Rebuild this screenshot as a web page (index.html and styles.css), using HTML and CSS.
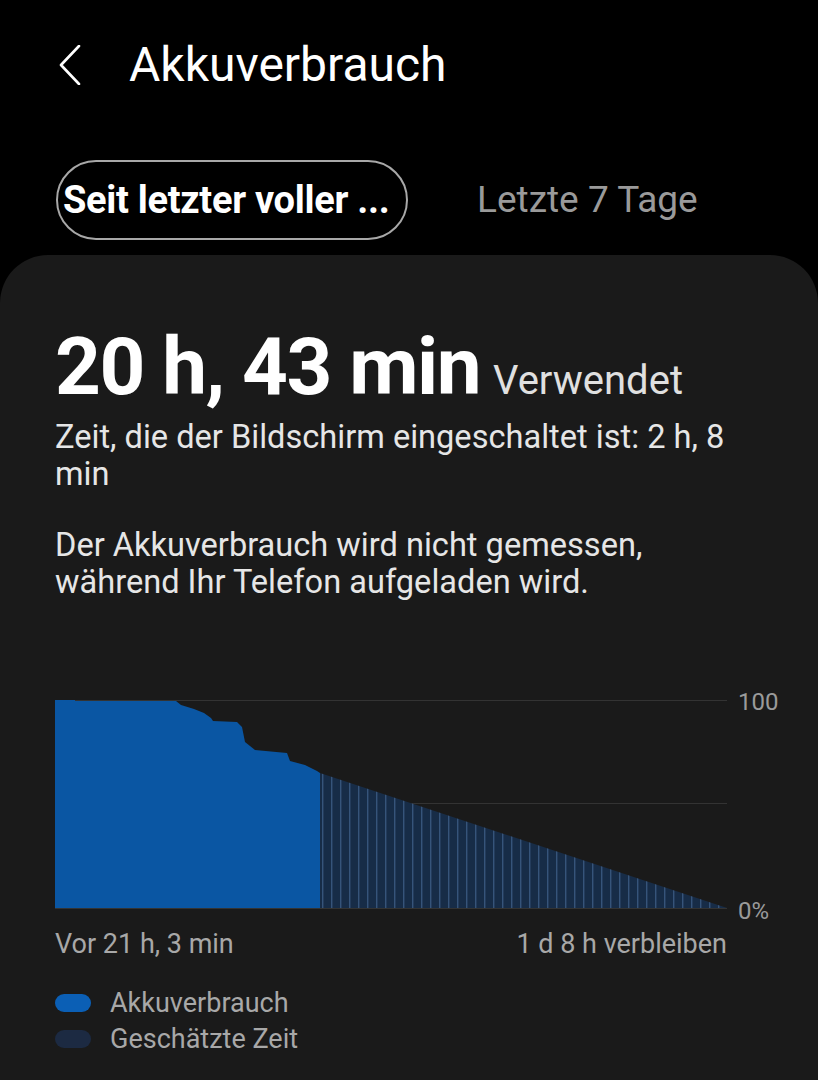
FILE: index.html
```html
<!DOCTYPE html>
<html lang="de">
<head>
    <meta charset="UTF-8">
    <meta name="viewport" content="width=device-width, initial-scale=1.0">
    <title>Akkuverbrauch</title>
    <link rel="stylesheet" href="styles.css">
</head>
<body>

<header class="topbar">
    <svg class="back" width="24" height="40" viewBox="0 0 24 40">
        <path d="M21 1 L3 20 L21 39" fill="none" stroke="#fff" stroke-width="2.6" stroke-linecap="round" stroke-linejoin="round"/>
    </svg>
    <h1>Akkuverbrauch</h1>
</header>

<nav class="tabs">
    <div class="tab active">Seit letzter voller ...</div>
    <div class="tab">Letzte 7 Tage</div>
</nav>

<section class="card">
    <div class="usage">
        <span class="usage-time">20 h, 43 min</span>
        <span class="usage-label">Verwendet</span>
    </div>
    <p class="info">Zeit, die der Bildschirm eingeschaltet ist: 2 h, 8 min</p>
    <p class="info note">Der Akkuverbrauch wird nicht gemessen, während Ihr Telefon aufgeladen wird.</p>

    <div class="chart">
        <div class="plot">
            <svg width="672" height="232" viewBox="0 0 672 232">
                <defs>
                    <pattern id="stripes" width="9" height="232" patternUnits="userSpaceOnUse" x="267">
                        <rect width="9" height="232" fill="#172c47"/>
                        <rect width="1.4" height="232" fill="#36547a"/>
                    </pattern>
                </defs>
                <!-- Rasterlinien -->
                <line x1="0" y1="10.5" x2="672" y2="10.5" stroke="#333" stroke-width="1"/>
                <line x1="0" y1="113.5" x2="672" y2="113.5" stroke="#333" stroke-width="1"/>
                <line x1="0" y1="218.5" x2="672" y2="218.5" stroke="#333" stroke-width="1"/>
                <!-- geschaetzte Zeit -->
                <polygon points="265,83 672,218 265,218" fill="url(#stripes)"/>
                <!-- gemessener Verbrauch -->
                <path d="M0 10 L20 10 L20 11 L121 11 L126 15 L139 19 L149 23 L156 28 L158 31 L182 32 L187 37 L190 52 L200 60 L232 63 L235 71 L250 75 L262 81 L265 83 L265 218 L0 218 Z" fill="#0a56a3"/>
            </svg>
            <div class="axis">
                <span>100</span>
                <span>0%</span>
            </div>
        </div>
        <div class="chart-labels">
            <span>Vor 21 h, 3 min</span>
            <span>1 d 8 h verbleiben</span>
        </div>
    </div>

    <ul class="legend">
        <li><span class="dot dot-used"></span>Akkuverbrauch</li>
        <li><span class="dot dot-estimate"></span>Geschätzte Zeit</li>
    </ul>
</section>

</body>
</html>
```

FILE: styles.css
```css
body {
    margin: 0;
    background-color: #000;
    color: #fff;
    font-family: Roboto, "Liberation Sans", sans-serif;
}
.topbar {
    display: flex;
    align-items: center;
    height: 48px;
    padding: 41px 0 0 58px;
}
.back {
    display: block;
}
.topbar h1 {
    margin: 0 0 0 47px;
    font-size: 48px;
    font-weight: 400;
    line-height: 48px;
}
.tabs {
    display: flex;
    align-items: center;
    margin-top: 71px;
    padding-left: 56px;
}
.tab {
    font-size: 37px;
    color: #9a9a9a;
    line-height: 76px;
}
.tab.active {
    width: 352px;
    box-sizing: border-box;
    padding-left: 5px;
    border: 2px solid #a8a8a8;
    border-radius: 40px;
    color: #fff;
    font-size: 38px;
    font-weight: 700;
    letter-spacing: -0.3px;
    white-space: nowrap;
    margin-right: 69px;
}
.card {
    margin-top: 15px;
    padding: 67px 55px 40px;
    background-color: #1a1a1a;
    border-radius: 48px 48px 0 0;
    min-height: 760px;
}
.usage {
    display: flex;
    align-items: baseline;
    gap: 13px;
}
.usage-time {
    font-size: 80px;
    font-weight: 700;
    letter-spacing: -1.5px;
    line-height: 90px;
}
.usage-label {
    font-size: 40px;
    color: #e0e0e0;
}
.info {
    width: 690px;
    margin: 7px 0 0;
    font-size: 32.6px;
    line-height: 37px;
    color: #e6e6e6;
}
.note {
    margin-top: 34px;
}
.chart {
    margin-top: 89px;
}
.plot {
    display: flex;
}
.plot svg {
    display: block;
    flex-shrink: 0;
}
.axis {
    display: flex;
    flex-direction: column;
    justify-content: space-between;
    flex-shrink: 0;
    height: 232px;
    padding: 1px 0 0 11px;
    box-sizing: border-box;
    font-size: 24px;
    line-height: 22px;
    color: #9a9a9a;
}
.chart-labels {
    display: flex;
    justify-content: space-between;
    width: 672px;
    margin-top: 6px;
    font-size: 27px;
    line-height: 32px;
    color: #a8a8a8;
}
.legend {
    list-style: none;
    margin: 25px 0 0;
    padding: 0;
    font-size: 27px;
    color: #a8a8a8;
}
.legend li {
    display: flex;
    align-items: center;
    gap: 19px;
    line-height: 36px;
}
.dot {
    width: 36px;
    height: 18px;
    border-radius: 9px;
}
.dot-used {
    background-color: #0b5fb5;
}
.dot-estimate {
    background-color: #1c2a42;
}
```
